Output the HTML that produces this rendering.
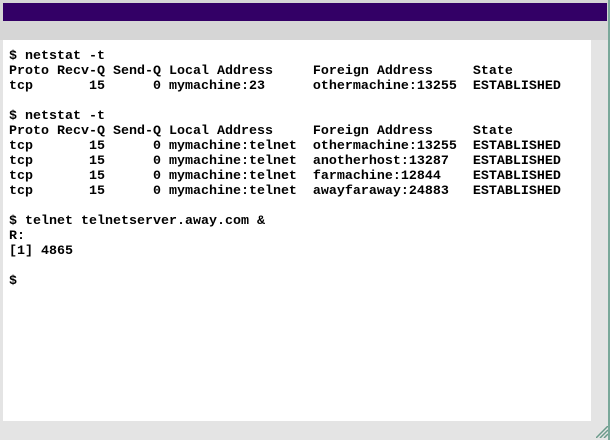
<!DOCTYPE html>
<html><head><style>
html,body{margin:0;padding:0;width:610px;height:440px;overflow:hidden;background:#e4e4e4;position:relative}
.top{position:absolute;left:0;top:0;width:610px;height:40px;background:#d6d6d6}
.bar{position:absolute;left:3px;top:3px;width:604px;height:18px;background:#330066}
.edge{position:absolute;left:608px;top:0;width:2px;height:440px;background:#7aa89a}
.w{position:absolute;left:3px;top:40px;width:588px;height:381px;background:#fff}
pre{position:absolute;left:9px;top:49px;margin:0;font-family:"Liberation Mono",monospace;font-size:13.33px;line-height:15px;font-weight:bold;color:#000}
.grip{position:absolute;right:2px;bottom:2px}
</style></head><body>
<div class="top"></div><div class="bar"></div>
<div class="w"></div>
<div class="edge"></div>
<pre>$ netstat -t
Proto Recv-Q Send-Q Local Address     Foreign Address     State
tcp       15      0 mymachine:23      othermachine:13255  ESTABLISHED

$ netstat -t
Proto Recv-Q Send-Q Local Address     Foreign Address     State
tcp       15      0 mymachine:telnet  othermachine:13255  ESTABLISHED
tcp       15      0 mymachine:telnet  anotherhost:13287   ESTABLISHED
tcp       15      0 mymachine:telnet  farmachine:12844    ESTABLISHED
tcp       15      0 mymachine:telnet  awayfaraway:24883   ESTABLISHED

$ telnet telnetserver.away.com &amp;
R:
[1] 4865

$</pre>
<svg class="grip" width="12" height="12" viewBox="0 0 12 12"><g stroke="#6a9a8a" stroke-width="1.5"><line x1="0" y1="12" x2="12" y2="0"/><line x1="4" y1="12" x2="12" y2="4"/><line x1="8" y1="12" x2="12" y2="8"/></g></svg>
</body></html>
